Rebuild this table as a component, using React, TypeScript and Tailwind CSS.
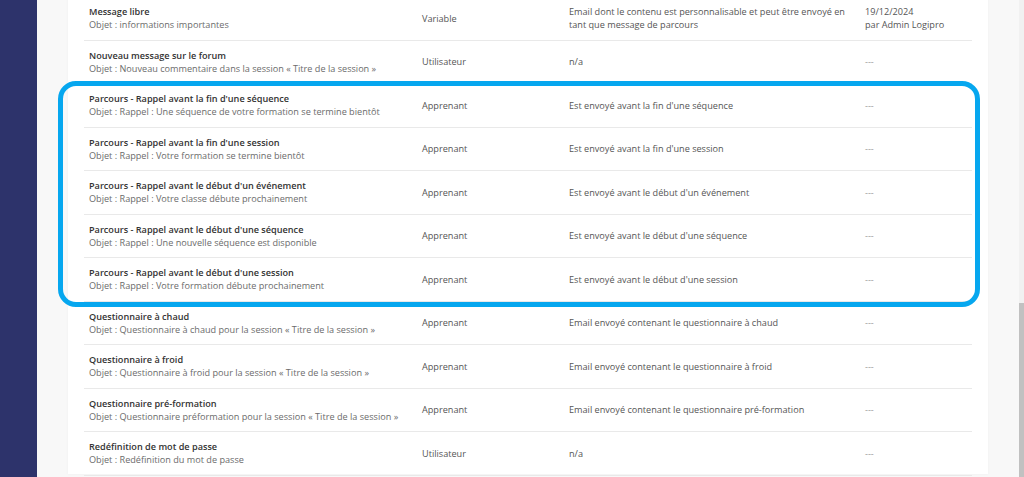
type Row = {
  title: string;
  subject: string;
  target: string;
  description: string;
  updated: string[];
};

const rows: Row[] = [
  {
    title: "Message libre",
    subject: "Objet : informations importantes",
    target: "Variable",
    description:
      "Email dont le contenu est personnalisable et peut être envoyé en tant que message de parcours",
    updated: ["19/12/2024", "par Admin Logipro"],
  },
  {
    title: "Nouveau message sur le forum",
    subject: "Objet : Nouveau commentaire dans la session « Titre de la session »",
    target: "Utilisateur",
    description: "n/a",
    updated: ["---"],
  },
  {
    title: "Parcours - Rappel avant la fin d'une séquence",
    subject: "Objet : Rappel : Une séquence de votre formation se termine bientôt",
    target: "Apprenant",
    description: "Est envoyé avant la fin d'une séquence",
    updated: ["---"],
  },
  {
    title: "Parcours - Rappel avant la fin d'une session",
    subject: "Objet : Rappel : Votre formation se termine bientôt",
    target: "Apprenant",
    description: "Est envoyé avant la fin d'une session",
    updated: ["---"],
  },
  {
    title: "Parcours - Rappel avant le début d'un événement",
    subject: "Objet : Rappel : Votre classe débute prochainement",
    target: "Apprenant",
    description: "Est envoyé avant le début d'un événement",
    updated: ["---"],
  },
  {
    title: "Parcours - Rappel avant le début d'une séquence",
    subject: "Objet : Rappel : Une nouvelle séquence est disponible",
    target: "Apprenant",
    description: "Est envoyé avant le début d'une séquence",
    updated: ["---"],
  },
  {
    title: "Parcours - Rappel avant le début d'une session",
    subject: "Objet : Rappel : Votre formation débute prochainement",
    target: "Apprenant",
    description: "Est envoyé avant le début d'une session",
    updated: ["---"],
  },
  {
    title: "Questionnaire à chaud",
    subject: "Objet : Questionnaire à chaud pour la session « Titre de la session »",
    target: "Apprenant",
    description: "Email envoyé contenant le questionnaire à chaud",
    updated: ["---"],
  },
  {
    title: "Questionnaire à froid",
    subject: "Objet : Questionnaire à froid pour la session « Titre de la session »",
    target: "Apprenant",
    description: "Email envoyé contenant le questionnaire à froid",
    updated: ["---"],
  },
  {
    title: "Questionnaire pré-formation",
    subject: "Objet : Questionnaire préformation pour la session « Titre de la session »",
    target: "Apprenant",
    description: "Email envoyé contenant le questionnaire pré-formation",
    updated: ["---"],
  },
  {
    title: "Redéfinition de mot de passe",
    subject: "Objet : Redéfinition du mot de passe",
    target: "Utilisateur",
    description: "n/a",
    updated: ["---"],
  },
];

function EmailRow({ row }: { row: Row }) {
  return (
    <div className="flex h-[43.5px] items-center border-b border-[#e9e9e9] px-[5px] text-[9.15px] leading-[13px]">
      <div className="w-[333px] shrink-0">
        <div className="font-semibold text-[#333]">{row.title}</div>
        <div className="text-[#6b6b6b]">{row.subject}</div>
      </div>
      <div className="w-[147px] shrink-0 text-[#555]">{row.target}</div>
      <div className="w-[296px] shrink-0 pr-[18px] text-[#555]">{row.description}</div>
      <div className="flex-1 text-[#555]">
        {row.updated.map((line) => (
          <div key={line} className={line === "---" ? "text-[#9a9a9a]" : ""}>
            {line}
          </div>
        ))}
      </div>
    </div>
  );
}

export default function App() {
  const before = rows.slice(0, 2);
  const highlighted = rows.slice(2, 7);
  const after = rows.slice(7);

  return (
    <div
      className="flex h-[477px] w-[1024px] overflow-hidden bg-[#f8f8f8]"
      style={{ fontFamily: '"Open Sans", "Liberation Sans", sans-serif' }}
    >
      <aside className="w-[37px] shrink-0 bg-[#2d336b]" />

      <main className="flex-1 px-[31px]">
        <div className="h-full bg-white px-[16px] shadow-[0_0_3px_rgba(0,0,0,0.04)]">
          <div className="-mt-[3px]">
            {before.map((row) => (
              <EmailRow key={row.title} row={row} />
            ))}

            <div className="relative">
              {highlighted.map((row) => (
                <EmailRow key={row.title} row={row} />
              ))}
              <div className="pointer-events-none absolute -top-[3px] -bottom-[5px] -left-[26px] -right-[8px] rounded-[18px] border-[5px] border-[#06a7ef]" />
            </div>

            {after.map((row) => (
              <EmailRow key={row.title} row={row} />
            ))}
          </div>
        </div>
      </main>

      <div className="flex w-[5px] shrink-0 flex-col bg-[#f1f1f1]">
        <div className="h-[303px]" />
        <div className="flex-1 bg-[#c1c1c1]" />
      </div>
    </div>
  );
}
